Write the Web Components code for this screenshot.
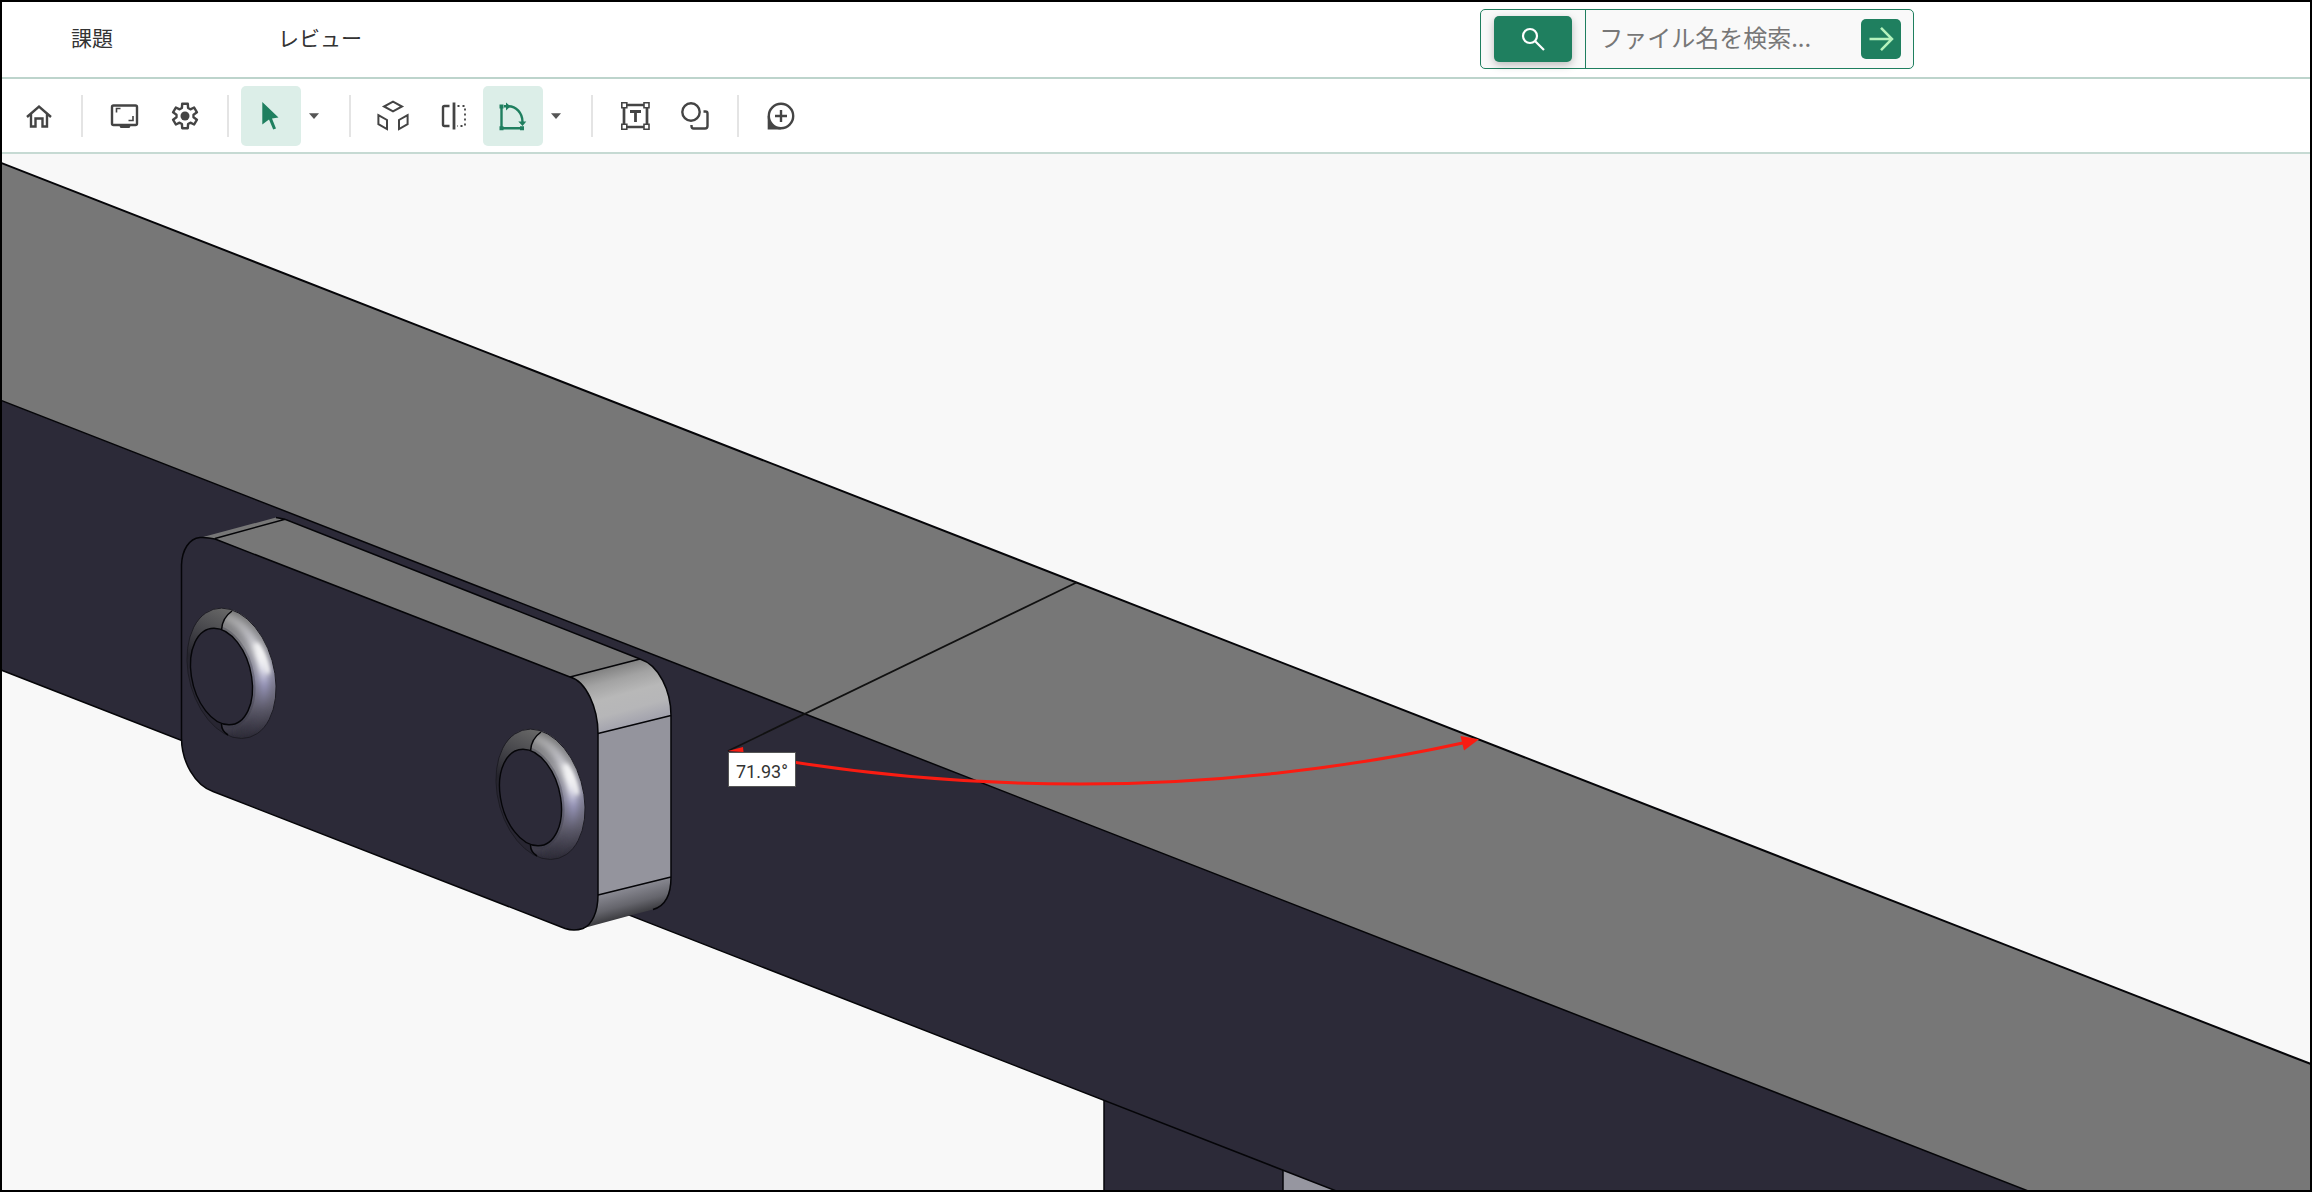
<!DOCTYPE html>
<html lang="ja">
<head>
<meta charset="utf-8">
<title>3D ビューア</title>
<style>
  html, body { margin: 0; height: 100%; }
  body { font-family: "Noto Sans CJK JP", sans-serif; color: #333; }
</style>
</head>
<body>
<viewer-app>
  <viewer-header slot="header">
    <nav-link href="#issues">課題</nav-link>
    <nav-link href="#review">レビュー</nav-link>
    <file-search slot="search" placeholder="ファイル名を検索..."></file-search>
  </viewer-header>
  <tool-bar slot="toolbar">
    <tool-button icon="home" label="ホーム"></tool-button>
    <tool-separator></tool-separator>
    <tool-button icon="screen" label="画面"></tool-button>
    <tool-button icon="gear" label="設定"></tool-button>
    <tool-separator></tool-separator>
    <tool-button icon="cursor" label="選択" active></tool-button>
    <tool-button icon="caret" label="選択メニュー" narrow></tool-button>
    <tool-separator></tool-separator>
    <tool-button icon="explode" label="分解"></tool-button>
    <tool-button icon="section" label="断面"></tool-button>
    <tool-button icon="measure" label="計測" active></tool-button>
    <tool-button icon="caret" label="計測メニュー" narrow></tool-button>
    <tool-separator></tool-separator>
    <tool-button icon="text" label="テキスト"></tool-button>
    <tool-button icon="shapes" label="図形"></tool-button>
    <tool-separator></tool-separator>
    <tool-button icon="comment" label="コメント"></tool-button>
  </tool-bar>
  <model-view>
    <angle-label slot="label">71.93°</angle-label>
  </model-view>
</viewer-app>

<script>
function define(name, html, setup) {
  const template = document.createElement('template');
  template.innerHTML = html;
  customElements.define(name, class extends HTMLElement {
    constructor() {
      super();
      this.attachShadow({ mode: 'open' }).append(template.content.cloneNode(true));
    }
    connectedCallback() { if (setup) setup(this, this.shadowRoot); }
  });
}

function gearPoints() {
  const points = [];
  for (let k = 0; k < 6; k++) {
    for (const [radius, offset] of [[8.6, -21], [12.5, -13], [12.5, 13], [8.6, 21]]) {
      const angle = (k * 60 + offset) * Math.PI / 180;
      points.push((radius * Math.sin(angle)).toFixed(2) + ',' + (-radius * Math.cos(angle)).toFixed(2));
    }
  }
  return points.join(' ');
}

const icons = {
  home: '<path d="M-12 1 0 -9.500 12 1M-8 -2V10.500H-3.500V2.500H3.500V10.500H8V-2"/>',
  screen: '<rect x="-13" y="-10.500" width="25" height="19.500" rx="1.500"/><path class="solid" d="M-6 9H6L4.500 12H-4.500Z"/><path stroke-width="1.600" d="M-8.500 -3.500V-7.500H-4.500M8 0V4.500H3.500"/>',
  gear: '<polygon stroke-linejoin="round" points="' + gearPoints() + '"/><circle class="solid" r="4.500"/>',
  cursor: '<path class="solid" d="M-8.700 -14V8.500L-2 3.500 2.200 13.500 5 12.400 1 2.500 7.500 1.500Z"/>',
  caret: '<path class="solid" d="M-5 -2.700H5L0 2.900Z"/>',
  explode: '<path stroke-width="2" d="M0 -14.300 9 -9.500 0 -4.600 -9 -9.500ZM-14.600 -.8 -6 4V13L-14.600 8.200ZM14.600 -.8 6 4V13L14.600 8.200Z"/>',
  section: '<path d="M-3.500 -10H-8.500Q-10 -10 -10 -8.500V8.500Q-10 10 -8.500 10H-3.500"/><path stroke-width="2.800" d="M1 -13.500V13.500"/><path stroke-dasharray="2 3" stroke-width="1.800" d="M4.500 -10H12V10H4"/>',
  measure: '<path d="M-11.500 -9V12.300H9M-9 -9.700H-5C3 -10 9.500 -3 9.500 6"/><path class="solid" d="M-13.500 -11.500H-9.500V-7.500H-13.500ZM-13.500 10.300H-9.500V14.300H-13.500ZM7 10.300H11V14.300H7ZM-7 -13.500 -2.500 -9.700 -7 -5.500ZM5.300 5.500H13.300L9.500 10Z"/>',
  text: '<path stroke-width="2.700" d="M-11 -11H12V11H-11Z"/><path class="hollow" d="M-13.200 -13.200h5v5h-5zM9 -13.200h5v5H9zM-13.200 8.200h5v5h-5zM9 8.200h5v5H9z"/><path stroke-width="2.800" d="M-5 -4.500H6M.5 -4.500V6"/>',
  shapes: '<circle cx="-4" cy="-4" r="8.700"/><path d="M8.500 -4.500H10.500Q12.500 -4.500 12.500 -2.500V10Q12.500 12.500 10 12.500H-1.500Q-3.500 12.500 -3.500 10V9"/>',
  comment: '<path class="solid" d="M-13.300 0V13.500H0Z"/><circle class="paper" r="12.200"/><path d="M-6 0H6M0 -6V6"/>'
};

define('viewer-app', `
  <style>
    :host { display: flex; flex-direction: column; box-sizing: border-box; height: 100vh; min-height: 480px; border: 2px solid #000; background: #fff; }
    main { flex: 1; min-height: 0; display: flex; }
    ::slotted(model-view) { flex: 1; }
  </style>
  <slot name="header"></slot>
  <slot name="toolbar"></slot>
  <main><slot></slot></main>`);

define('viewer-header', `
  <style>
    :host { display: block; border-bottom: 2px solid #bdd4cc; background: #fff; }
    header { display: flex; align-items: center; justify-content: space-between; box-sizing: border-box; height: 75px; padding: 0 17.150% 2px 69px; }
    nav { display: flex; align-items: center; gap: 165px; padding-bottom: 3px; }
  </style>
  <header><nav><slot></slot></nav><slot name="search"></slot></header>`);

define('nav-link', `
  <style>
    :host { display: block; }
    a { color: #333; text-decoration: none; font-size: 21px; line-height: 30px; white-space: nowrap; }
  </style>
  <a><slot></slot></a>`, (host, root) => {
    root.querySelector('a').href = host.getAttribute('href');
  });

define('file-search', `
  <style>
    :host { display: block; }
    form { display: flex; align-items: center; box-sizing: border-box; width: 434px; height: 60px; border: 1px solid #1f7f5f; border-radius: 5px; background: #f9f9f9; }
    button { display: grid; place-items: center; padding: 0; border: 0; border-radius: 5px; background: #1f7f5f; flex: none; }
    .find { width: 78px; height: 46px; box-shadow: 0 3px 8px rgba(0, 0, 0, .25); }
    .left { display: flex; align-items: center; height: 100%; padding: 0 13px; border-right: 1px solid #1f7f5f; }
    .go { width: 40px; height: 40px; margin-right: 12px; }
    input { flex: 1; min-width: 0; height: 100%; box-sizing: border-box; border: 0; outline: 0; background: none; padding: 0 0 4px 13px; font: inherit; font-size: 24px; color: #333; }
    input::placeholder { color: #777; opacity: 1; }
    svg { width: 30px; height: 30px; fill: none; stroke-width: 2.200; }
  </style>
  <form role="search">
    <div class="left">
      <button class="find" type="button" aria-label="検索"><svg viewBox="-15 -15 30 30" stroke="#fff"><circle cx="-3" cy="-3" r="7"/><path d="M2.200 2.200 11 11"/></svg></button>
    </div>
    <input type="text" aria-label="ファイル名">
    <button class="go" type="submit" aria-label="実行"><svg viewBox="-15 -15 30 30" stroke="#b5f2bd"><path stroke-width="2.500" d="M-11.500 0H11M0 -11.200 11 0 0 11.200"/></svg></button>
  </form>`, (host, root) => {
    root.querySelector('input').placeholder = host.getAttribute('placeholder');
    root.querySelector('form').addEventListener('submit', event => event.preventDefault());
  });

define('tool-bar', `
  <style>
    :host { display: block; border-bottom: 2px solid #c6dad3; background: #fff; }
    div { display: flex; align-items: center; height: 73px; padding: 0 7px; }
  </style>
  <div role="toolbar"><slot></slot></div>`);

define('tool-separator', `
  <style>:host { display: block; width: 2px; height: 42px; margin: 0 12px; background: #e4e4e4; }</style>`);

define('tool-button', `
  <style>
    :host { display: block; }
    button { display: grid; place-items: center; width: 60px; height: 60px; padding: 0; border: 0; border-radius: 5px; background: none; color: #444; }
    svg { width: 40px; height: 40px; fill: none; stroke: currentColor; stroke-width: 2.400; }
    .solid { fill: currentColor; stroke: none; }
    .hollow { fill: #fff; stroke-width: 1.600; }
    .paper { fill: #fff; }
    :host([active]) button { background: #dceee8; color: #1f7f5f; }
    :host([narrow]) { margin-right: 10px; }
    :host([narrow]) button { width: 26px; color: #555; }
    :host([narrow]) svg { width: 20px; }
  </style>
  <button type="button"><svg viewBox="-20 -20 40 40" aria-hidden="true"></svg></button>`, (host, root) => {
    const svg = root.querySelector('svg');
    if (host.hasAttribute('narrow')) svg.setAttribute('viewBox', '-10 -20 20 40');
    svg.innerHTML = icons[host.getAttribute('icon')];
    root.querySelector('button').setAttribute('aria-label', host.getAttribute('label'));
  });

define('angle-label', `
  <style>
    :host { display: block; box-sizing: border-box; border: 1px solid #555; background: #fff; color: #333; padding: 8px 7px 4px; font: 18px/21px Roboto, sans-serif; white-space: nowrap; }
  </style>
  <slot></slot>`);

define('model-view', `
  <style>
    :host { display: block; position: relative; overflow: hidden; background: #f8f8f8; }
    svg { display: block; width: 100%; height: 100%; }
    ::slotted(angle-label) { position: absolute; left: 726px; top: 598px; }
    .edge { fill: none; stroke: #050508; stroke-width: 1.500; }
    .rim { stroke-width: 2; }
    .hair { fill: none; stroke: #050508; stroke-width: 1.400; vector-effect: non-scaling-stroke; }
  </style>
  <svg viewBox="2 154 2308 1036" preserveAspectRatio="xMinYMin slice" role="img" aria-label="3D モデル">
    <defs>
      <linearGradient id="corner" gradientUnits="userSpaceOnUse" x1="605" y1="666" x2="622" y2="728">
        <stop offset="0" stop-color="#7c7c7c"/><stop offset=".25" stop-color="#a3a3a3"/><stop offset=".5" stop-color="#b8b8b8"/><stop offset=".75" stop-color="#b6b6b8"/><stop offset="1" stop-color="#a2a2ad"/>
      </linearGradient>
      <linearGradient id="under" gradientUnits="userSpaceOnUse" x1="625" y1="887" x2="634" y2="921">
        <stop offset="0" stop-color="#8d8d96"/><stop offset=".5" stop-color="#65656c"/><stop offset="1" stop-color="#252528"/>
      </linearGradient>
      <linearGradient id="shade" gradientUnits="userSpaceOnUse" x1="222" y1="608" x2="192" y2="672">
        <stop offset="0" stop-color="#666"/><stop offset=".35" stop-color="#4a4a4e"/><stop offset=".8" stop-color="#25242d"/><stop offset="1" stop-color="#282632"/>
      </linearGradient>
      <linearGradient id="metal" gradientUnits="userSpaceOnUse" x1="235" y1="610" x2="250" y2="738">
        <stop offset="0" stop-color="#737373"/><stop offset=".3" stop-color="#929298"/><stop offset=".55" stop-color="#85849a"/><stop offset=".75" stop-color="#62606f"/><stop offset="1" stop-color="#292733"/>
      </linearGradient>
      <linearGradient id="shine" gradientUnits="userSpaceOnUse" x1="232" y1="615" x2="252" y2="735">
        <stop offset="0" stop-color="#a0a0a0"/><stop offset=".22" stop-color="#c3c3ca"/><stop offset=".36" stop-color="#fff"/><stop offset=".46" stop-color="#f4f4fb"/><stop offset=".6" stop-color="#9c9ac0"/><stop offset=".8" stop-color="#5b5969"/><stop offset="1" stop-color="#2c2a36"/>
      </linearGradient>
      <filter id="soft" x="-50%" y="-50%" width="200%" height="200%"><feGaussianBlur stdDeviation="3"/></filter>
      <filter id="softer" x="-50%" y="-50%" width="200%" height="200%"><feGaussianBlur stdDeviation="2"/></filter>
      <clipPath id="ring"><circle r="1" transform="matrix(43.400 0 10 65.200 231.500 673.300)"/></clipPath>
      <clipPath id="half"><path d="M232 600V611Q222 618 221.500 630L235 680 221.500 724Q222 733 232 745H290V600Z"/></clipPath>
      <g id="knob">
        <g clip-path="url(#ring)">
          <rect x="180" y="600" width="110" height="145" fill="url(#shade)"/>
          <g clip-path="url(#half)">
            <rect x="200" y="600" width="90" height="145" fill="url(#metal)"/>
            <path d="M224 616C251 624 267 662 264 694C262 716 252 731 238 734" fill="none" stroke="url(#shine)" stroke-width="9" filter="url(#soft)"/>
            <path d="M257 645Q266 658 268 672" fill="none" stroke="#fff" stroke-width="4" stroke-linecap="round" filter="url(#softer)"/>
            <circle r="1" transform="matrix(30.100 0 7.500 48.300 221.500 676.500)" fill="none" stroke="#34323f" stroke-width="6" vector-effect="non-scaling-stroke" opacity=".3"/>
          </g>
        </g>
        <circle r="1" transform="matrix(43.400 0 10 65.200 231.500 673.300)" fill="none" stroke="#1d1c24" stroke-width="1" vector-effect="non-scaling-stroke"/>
        <path class="edge" d="M232 611Q222 618 221.500 630M221.500 724Q221.500 731 228 735"/>
        <circle r="1" transform="matrix(30.100 0 7.500 48.300 221.500 676.500)" fill="#2c2a38"/>
        <circle class="hair" r="1" transform="matrix(30.100 0 7.500 48.300 221.500 676.500)"/>
      </g>
    </defs>

    <!-- Leg under the beam -->
    <path fill="#2c2a38" d="M1104 1095H1283V1200H1104Z"/>
    <path fill="#9696a0" d="M1283 1168L1370 1204H1283Z"/>
    <path class="edge" d="M1104 1100V1200M1283 1169V1200"/>

    <!-- Beam -->
    <path fill="#777" d="M-10 158.600L2400 1098.800V1336L-10 396Z"/>
    <path fill="#2c2a38" d="M-10 396L2400 1336V1606L-10 665.700Z"/>
    <path class="edge" d="M-10 396L2400 1336M-10 665.700L2400 1606"/>
    <path class="edge rim" d="M-10 158.600L2400 1098.800"/>

    <!-- Mounting plate -->
    <path fill="#777" d="M203 537L276 517.500 285 519.300 640 659 570 677 215 539Z"/>
    <path fill="url(#corner)" d="M570 677L640 659C659 665 671 691 671 715.500L598 733.500C598 708 586 681 570 677Z"/>
    <path fill="#94949d" d="M598 733.500L671 715.500V877L598 895Z"/>
    <path fill="url(#under)" d="M598 895L671 877C671 893 666 906 653 909.500L632 915 584 928Z"/>
    <path fill="#2c2a38" d="M181.500 565C182 550 189 538.500 200 537.500Q207 537 215 539L570 677C586 681 598 708 598 733.500V895C598 912 592 925 583 928.500Q574 931.500 565 928.500L213 791.500C195 785 181.500 762 181.500 738Z"/>
    <path class="edge" d="M565 928.500L213 791.500C195 785 181.500 762 181.500 738V565C182 550 189 538.500 200 537.500Q207 537 215 539L570 677C586 681 598 708 598 733.500V895C598 912 592 925 583 928.500Q574 931.500 565 928.500"/>
    <path class="edge" d="M215 538.500L285 519.300 640 659C659 665 671 691 671 715.500V877C671 893 666 906 653 909.500M285 519.300L276 517.500M570 677L640 659M598 733.500L671 715.500M598 895L671 877"/>
    <use href="#knob"/>
    <use href="#knob" transform="translate(309 121)"/>

    <!-- Angle measurement -->
    <path fill="none" stroke="#111" stroke-width="1.700" d="M728 751L1076.500 582.500"/>
    <path fill="none" stroke="#f91c12" stroke-width="3" d="M780 760C890 778 990 784 1080 784C1210 784 1345 769 1465 742.500"/>
    <path fill="#f91c12" d="M1479 739.300L1460.500 736 1464 750.500ZM728 751L743 747 743.500 752Z"/>
  </svg>
  <slot name="label"></slot>`);
</script>
</body>
</html>
